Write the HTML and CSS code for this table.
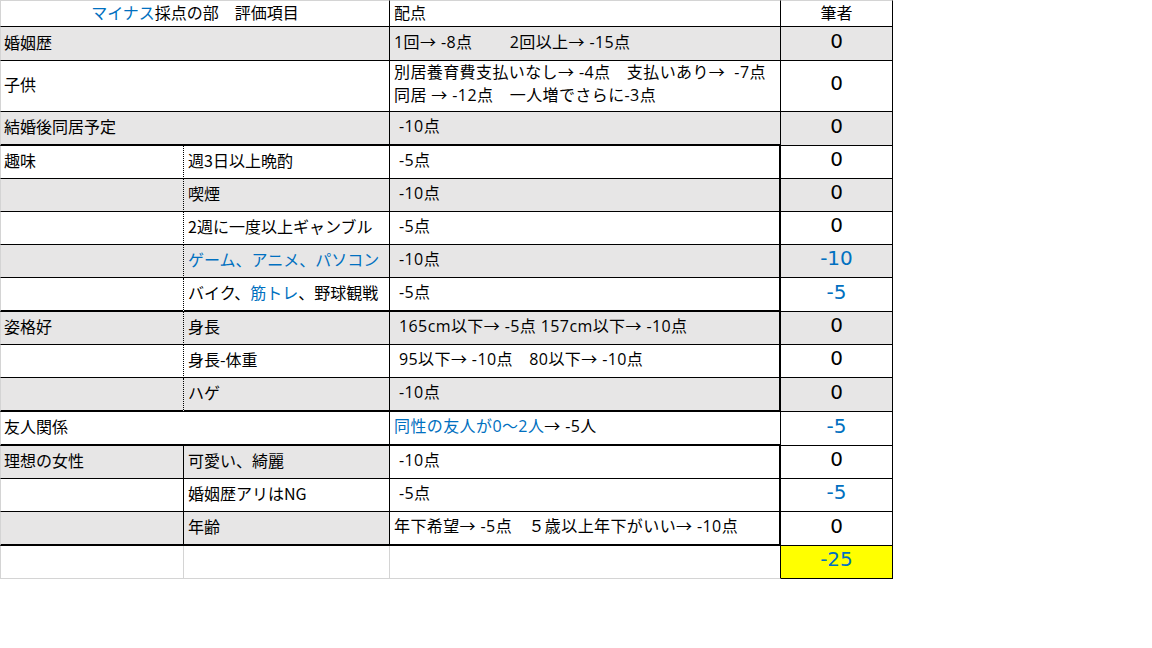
FILE: index.html
```html
<!DOCTYPE html>
<html lang="ja">
<head>
<meta charset="utf-8">
<title>マイナス採点の部</title>
<link rel="stylesheet" href="styles.css">
</head>
<body>
<div class="sheet">
  <!-- header -->
  <div class="c a s2 top center"><span class="blue">マイナス</span>採点の部　評価項目</div>
  <div class="c top">配点</div>
  <div class="c top center">筆者</div>

  <div class="c a s2 g">婚姻歴</div>
  <div class="c g lat">1回→ -8点　　 2回以上→ -15点</div>
  <div class="c g num">0</div>

  <div class="c a s2">子供</div>
  <div class="c multi lat">別居養育費支払いなし→ -4点　支払いあり→  -7点<br>同居 → -12点　一人増でさらに-3点</div>
  <div class="c num">0</div>

  <div class="c a s2 g thick">結婚後同居予定</div>
  <div class="c g thick ind lat">-10点</div>
  <div class="c g num">0</div>

  <div class="c a dot">趣味</div>
  <div class="c">週3日以上晩酌</div>
  <div class="c tr ind lat">-5点</div>
  <div class="c num">0</div>

  <div class="c a dot g"></div>
  <div class="c g">喫煙</div>
  <div class="c g tr ind lat">-10点</div>
  <div class="c g num">0</div>

  <div class="c a dot"></div>
  <div class="c">2週に一度以上ギャンブル</div>
  <div class="c tr ind lat">-5点</div>
  <div class="c num">0</div>

  <div class="c a dot g"></div>
  <div class="c g blue">ゲーム、アニメ、パソコン</div>
  <div class="c g tr ind lat">-10点</div>
  <div class="c g num blue">-10</div>

  <div class="c a dot thick"></div>
  <div class="c thick">バイク、<span class="blue">筋トレ</span>、野球観戦</div>
  <div class="c tr thick ind lat">-5点</div>
  <div class="c num blue">-5</div>

  <div class="c a dot g">姿格好</div>
  <div class="c g">身長</div>
  <div class="c g tr ind lat">165cm以下→ -5点 157cm以下→ -10点</div>
  <div class="c g num">0</div>

  <div class="c a dot"></div>
  <div class="c">身長-体重</div>
  <div class="c tr ind lat">95以下→ -10点　80以下→ -10点</div>
  <div class="c num">0</div>

  <div class="c a dot g thick"></div>
  <div class="c g thick">ハゲ</div>
  <div class="c g tr thick ind lat">-10点</div>
  <div class="c g num">0</div>

  <div class="c a s2 thick">友人関係</div>
  <div class="c thick lat"><span class="blue">同性の友人が0～2人</span>→ -5人</div>
  <div class="c num blue">-5</div>

  <div class="c a g">理想の女性</div>
  <div class="c g">可愛い、綺麗</div>
  <div class="c tr ind lat">-10点</div>
  <div class="c num">0</div>

  <div class="c a"></div>
  <div class="c">婚姻歴アリはNG</div>
  <div class="c tr ind lat">-5点</div>
  <div class="c num blue">-5</div>

  <div class="c a g thick"></div>
  <div class="c g thick">年齢</div>
  <div class="c tr thick lat">年下希望→ -5点　５歳以上年下がいい→ -10点</div>
  <div class="c num">0</div>

  <div class="c a grid"></div>
  <div class="c grid"></div>
  <div class="c gridb"></div>
  <div class="c num blue total">-25</div>
</div>
</body>
</html>
```
FILE: styles.css
```css
html, body {
  margin: 0;
  padding: 0;
  background: #ffffff;
}

body {
  font-family: "Noto Sans CJK JP", "Noto Sans", sans-serif;
  font-size: 16px;
  color: #000000;
}

.sheet {
  display: grid;
  grid-template-columns: 184px 206px 391px 112px;
  grid-template-rows: 27px 34px 51px 34px 33px 33px 33px 33px 34px 33px 33px 34px 34px 33px 33px 34px 33px;
  width: 893px;
}

.c {
  box-sizing: border-box;
  display: flex;
  align-items: center;
  padding-left: 4px;
  padding-bottom: 4px;
  border-right: 1px solid #000;
  border-bottom: 1px solid #000;
  white-space: pre;
  overflow: hidden;
  line-height: 22px;
}

.lat {
  font-family: "Open Sans", "Noto Sans CJK JP", sans-serif;
  letter-spacing: 0.4px;
}

.a {
  border-left: 1px solid #d4d4d4;
  padding-left: 3px;
}

.s2 {
  grid-column: span 2;
}

.top {
  border-top: 1px solid #d4d4d4;
}

.center {
  justify-content: center;
  padding-left: 0;
}

.g {
  background: #e7e6e6;
}

.thick {
  border-bottom-width: 2px;
}

.tr {
  border-right-width: 2px;
}

.dot {
  border-right-style: dotted;
}

.ind {
  padding-left: 9px;
}

.multi {
  display: block;
  padding-top: 0;
  padding-bottom: 0;
  line-height: 23px;
}

.num {
  justify-content: center;
  padding-left: 0;
  padding-bottom: 6px;
  font-family: "DejaVu Sans", sans-serif;
  font-size: 20px;
}

.blue {
  color: #0070c0;
}

.grid {
  border-right-color: #d4d4d4;
  border-bottom-color: #d4d4d4;
}

.gridb {
  border-bottom-color: #d4d4d4;
}

.total {
  background: #ffff00;
}
```
